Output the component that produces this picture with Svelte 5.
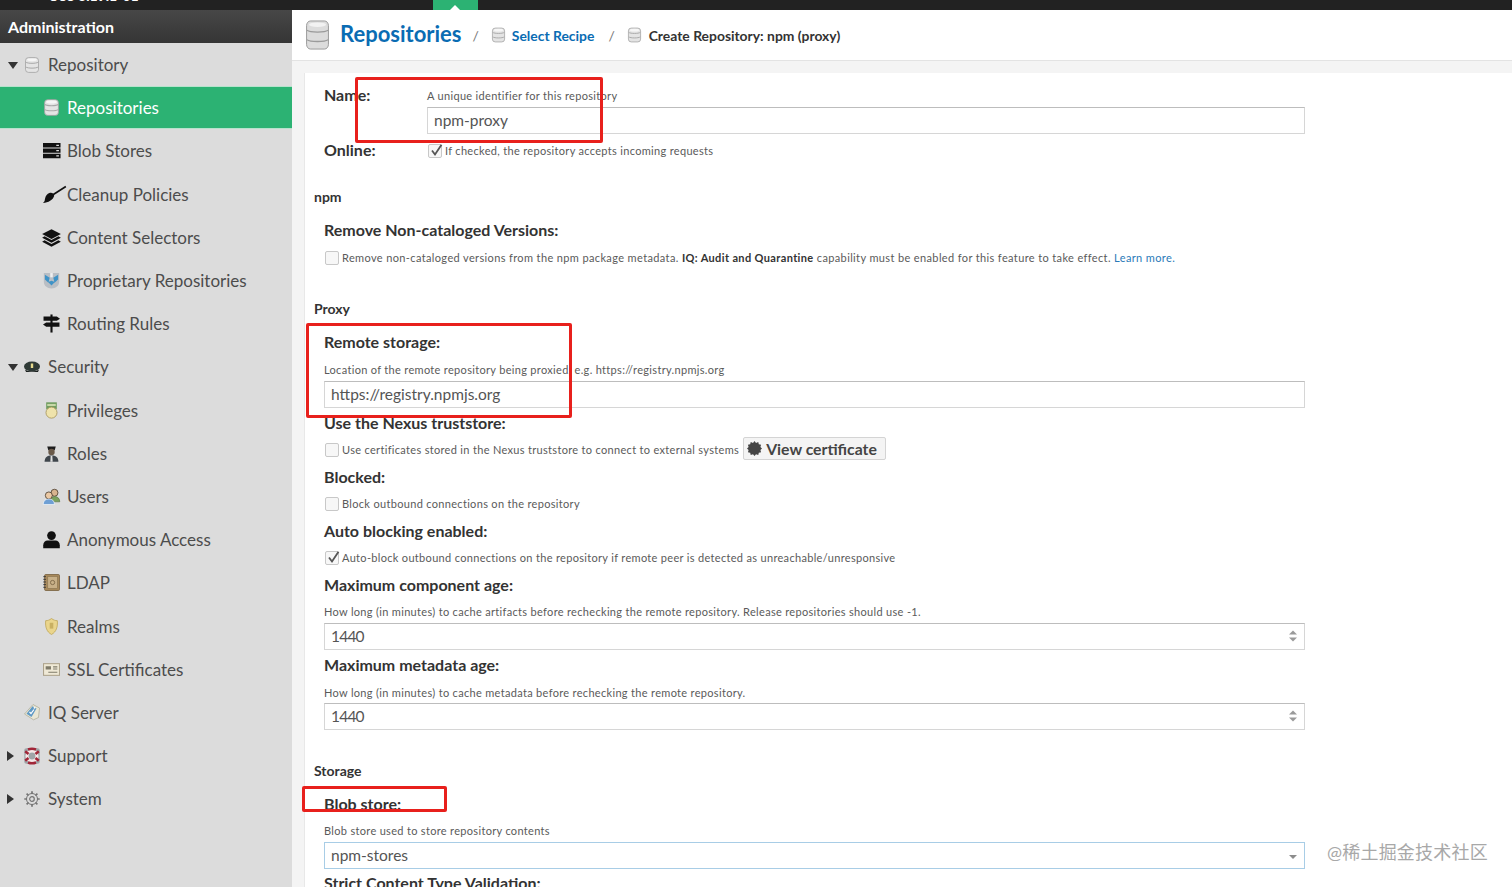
<script>
	const menu = [
		{ label: "Repository", icon: "db", level: 1, caret: "down" },
		{ label: "Repositories", icon: "db", level: 2, active: true },
		{ label: "Blob Stores", icon: "blob", level: 2 },
		{ label: "Cleanup Policies", icon: "broom", level: 2 },
		{ label: "Content Selectors", icon: "layers", level: 2 },
		{ label: "Proprietary Repositories", icon: "proprietary", level: 2 },
		{ label: "Routing Rules", icon: "signpost", level: 2 },
		{ label: "Security", icon: "hat", level: 1, caret: "down" },
		{ label: "Privileges", icon: "medal", level: 2 },
		{ label: "Roles", icon: "officer", level: 2 },
		{ label: "Users", icon: "users", level: 2 },
		{ label: "Anonymous Access", icon: "person", level: 2 },
		{ label: "LDAP", icon: "book", level: 2 },
		{ label: "Realms", icon: "shield", level: 2 },
		{ label: "SSL Certificates", icon: "cert", level: 2 },
		{ label: "IQ Server", icon: "tag", level: 1 },
		{ label: "Support", icon: "buoy", level: 1, caret: "right" },
		{ label: "System", icon: "gear", level: 1, caret: "right" },
	];
</script>

{#snippet icon(name)}
	<svg class="icon" viewBox="0 0 16 16">
		{#if name === "db"}
			<rect x="1.500" y=".6" width="13" height="14.800" rx="3" fill="#e4e4e4" stroke="#a2a2a2" stroke-width=".8" />
			<path d="M1.800 5.200c2 1.500 10.400 1.500 12.400 0M1.800 10c2 1.500 10.400 1.500 12.400 0" fill="none" stroke="#a8a8a8" stroke-width="1" />
			<ellipse cx="8" cy="2.800" rx="5" ry="1.400" fill="#f6f6f6" />
		{:else if name === "blob"}
			<path d="M0 1h16.500v4.200H0zM0 6h16.500v4.200H0zM0 11h16.500v4.200H0z" fill="#111" />
			<path d="M12.500 2.500h2.500v1.200h-2.500zM12.500 7.500h2.500v1.200h-2.500zM12.500 12.500h2.500v1.200h-2.500z" fill="#ddd" />
		{:else if name === "broom"}
			<path d="M9 8.500 21.500.5" stroke="#111" stroke-width="1.500" fill="none" />
			<path d="M6 6.500c2.500-.8 4.800 .8 4.500 3-1 3.500-5.500 6.500-10.500 6.500 2-2 1.500-2.500 2-4.500.5-2.400 2-4.200 4-5z" fill="#111" />
		{:else if name === "layers"}
			<path d="M8 .2 16.800 4.800 8 9.400-.8 4.800z" fill="#111" />
			<path d="M1.500 6.800-.8 8.300 8 13l8.800-4.700-2.300-1.500L8 10.300z" fill="#111" />
			<path d="M1.500 10.600-.8 12 8 16.600l8.800-4.600-2.300-1.400L8 14z" fill="#111" />
		{:else if name === "proprietary"}
			<path d="M.8 1h14.400v8.500c0 3.500-3 6-7.200 6S.8 13 .8 9.500z" fill="#b9bec4" />
			<path d="M1.800 2.500l4.500 3-1.200 4.500-3.300-3zM14.200 2.500l-4.500 3 1.200 4.500 3.300-3zM4.800 9.500 8 12.800l3.200-3.300L8 8.300z" fill="#3f93c7" />
			<path d="M6.800 1h2.400v4H6.800z" fill="#f0f0f0" />
		{:else if name === "signpost"}
			<path d="M7 -.5h2v17H7z" fill="#111" />
			<path d="M.5 1.500h12.500l3 2-3 2H.5zM15.500 7H3L0 9l3 2h12.500z" fill="#111" />
		{:else if name === "hat"}
			<ellipse cx="8" cy="7.500" rx="8" ry="5" fill="#2f3a36" />
			<path d="M1 10.500c3 2.500 11 2.500 14 0l-1 2.500H2z" fill="#1a1f1d" />
			<path d="M6.800 4.500h2.400v4.500H6.800z" fill="#e5d98c" />
		{:else if name === "medal"}
			<rect x="3" y=".3" width="10" height="6.500" fill="#6f9c5e" />
			<path d="M4 1.800h8v2H4z" fill="#c7d8a8" />
			<circle cx="8" cy="10" r="5.200" fill="#efe3ab" stroke="#a8965c" stroke-width=".8" />
		{:else if name === "officer"}
			<path d="M4 1.500h8l-1 3.500H5z" fill="#1d1d1d" />
			<circle cx="8" cy="6.500" r="3" fill="#6a5a4a" />
			<path d="M1.500 15.800c0-4.300 2.500-6 6.500-6s6.500 1.700 6.500 6z" fill="#3f464c" />
			<path d="M7.200 10.300h1.600l.3 5.500H6.900z" fill="#e2e2e2" />
		{:else if name === "users"}
			<circle cx="10.800" cy="4.500" r="3.300" fill="#d8b48f" stroke="#4e4030" stroke-width=".8" />
			<path d="M7 13c0-3.300 1.500-5 4-5s4.800 1.700 4.800 5z" fill="#7ba25e" stroke="#4e6a3a" stroke-width=".5" />
			<circle cx="5.500" cy="7" r="3.300" fill="#ecc9a4" stroke="#4e4030" stroke-width=".8" />
			<path d="M.2 15.500c0-3.500 2.200-5.200 5.300-5.200s5.300 1.700 5.300 5.200z" fill="#6e9fd4" stroke="#fff" stroke-width=".6" />
		{:else if name === "person"}
			<circle cx="8" cy="4.300" r="4.100" fill="#111" />
			<path d="M.2 16.300v-2.800c0-3 2-4.500 4-4.500h7.600c2 0 4 1.500 4 4.500v2.800z" fill="#111" />
		{:else if name === "book"}
			<rect x="1.500" y=".5" width="14" height="15" rx="1" fill="#a98a5c" stroke="#6e5735" stroke-width=".7" />
			<rect x="4.500" y="2.500" width="9" height="11" fill="#c8b088" stroke="#84704c" stroke-width=".5" />
			<path d="M.3 2.500h2.500M.3 5h2.500M.3 7.500h2.500M.3 10h2.500M.3 12.500h2.500" stroke="#333" stroke-width=".9" />
			<circle cx="9" cy="8" r="2" fill="none" stroke="#7a6444" stroke-width=".8" />
		{:else if name === "shield"}
			<path d="M8 .5c2 1.500 3.500 2 5.500 2 .5 6-1 10.500-5.500 13-4.500-2.500-6-7-5.500-13 2 0 3.500-.5 5.500-2z" fill="#ead58c" stroke="#c0a95c" stroke-width=".8" />
			<path d="M6.300 4.500h3.400v5.500H6.300z" fill="#c9b062" />
		{:else if name === "cert"}
			<rect x=".5" y="2.500" width="15" height="11" fill="#efe9d6" stroke="#ada38c" stroke-width="1" />
			<path d="M2.500 5h5v3h-5zM9.500 5h4v1h-4zM9.500 7h4v1h-4zM5 10h8.500v1H5z" fill="#7f7b6a" />
		{:else if name === "tag"}
			<path d="M9 .5 15.500 4l-1 9.500-5 2.300L.5 10z" fill="#e9e6d4" stroke="#aaa994" stroke-width=".7" />
			<path d="M8.500 2.200 12.500 4.500l-5 8.500L2.500 9.800z" fill="#5f99c4" />
			<path d="M5.500 8l1.500 1.500 3-4" stroke="#fff" stroke-width="1.200" fill="none" />
			<circle cx="10.500" cy="3.800" r=".9" fill="#fff" />
		{:else if name === "buoy"}
			<rect x=".3" y=".3" width="15.400" height="15.400" rx="2" fill="#9fa5a8" />
			<circle cx="8" cy="8" r="5" fill="none" stroke="#f4e8e8" stroke-width="3.200" />
			<path d="M1.200 3.200l3.300 2.800M14.800 3.200l-3.300 2.800M1.200 12.800l3.300-2.800M14.800 12.800l-3.300-2.800M4 1.500c2.500-1 5.500-1 8 0M4 14.500c2.500 1 5.500 1 8 0" stroke="#a12638" stroke-width="2.500" fill="none" />
		{:else if name === "gear"}
			<circle cx="8" cy="8" r="5.500" fill="none" stroke="#747474" stroke-width="1" />
			<circle cx="8" cy="8" r="2.300" fill="none" stroke="#747474" stroke-width="1.200" />
			<path d="M8 .3v2.700M8 13v2.700M.3 8H3M13 8h2.700M2.600 2.600l1.900 1.900M11.500 11.500l1.900 1.900M13.400 2.600l-1.900 1.900M4.500 11.500l-1.900 1.900" stroke="#747474" stroke-width="1.700" />
		{/if}
	</svg>
{/snippet}

{#snippet check(on, text)}
	<span class="box">
		{#if on}
			<svg viewBox="0 0 14 14"><path d="M3 6.500 6 10.500 12.500 .8" fill="none" stroke="#555" stroke-width="1.800" /></svg>
		{/if}
	</span>
	<span class="help">{@render text()}</span>
{/snippet}

{#snippet spinner()}
	<svg class="spin" viewBox="0 0 8 12"><path d="M0 4.500 4 .5l4 4zM0 7.500h8l-4 4z" fill="#9a9a9a" /></svg>
{/snippet}

<div class="app">
	<header class="topbar">
		<span class="brand">OSS 3.19.1-01</span>
		<span class="tab"></span>
	</header>

	<div class="body">
		<aside class="sidebar">
			<h2>Administration</h2>
			<nav>
				{#each menu as item}
					<div class="item level{item.level}" class:active={item.active}>
						{#if item.caret}
							<span class="caret {item.caret}"></span>
						{/if}
						{@render icon(item.icon)}
						<span class="text">{item.label}</span>
					</div>
				{/each}
			</nav>
		</aside>

		<main>
			<div class="crumbs">
				<svg class="db-big" viewBox="0 0 16 16" preserveAspectRatio="none">
					<rect x="1" y=".5" width="14" height="15" rx="2.500" fill="#dcdcdc" stroke="#8f8f8f" stroke-width=".5" />
					<path d="M1.300 5.500c2 1.300 11.400 1.300 13.400 0M1.300 10.500c2 1.300 11.400 1.300 13.400 0" fill="none" stroke="#9a9a9a" stroke-width=".7" />
					<ellipse cx="8" cy="2.500" rx="5.500" ry="1.200" fill="#f2f2f2" />
				</svg>
				<span class="title">Repositories</span>
				<span class="sep">/</span>
				{@render icon("db")}
				<span class="link">Select Recipe</span>
				<span class="sep">/</span>
				{@render icon("db")}
				<span class="current">Create Repository: npm (proxy)</span>
			</div>

			<div class="page">
				<form class="panel">
					<div class="row name">
						<span class="label">Name:</span>
						<div class="col">
							<p class="help">A unique identifier for this repository</p>
							<div class="input">npm-proxy</div>
						</div>
					</div>
					<div class="row online">
						<span class="label">Online:</span>
						<div class="checkrow">
							{#snippet t1()}If checked, the repository accepts incoming requests{/snippet}
							{@render check(true, t1)}
						</div>
					</div>

					<h3 class="section npm">npm</h3>
					<div class="label nc">Remove Non-cataloged Versions:</div>
					<div class="checkrow nc-check">
						{#snippet t2()}Remove non-cataloged versions from the npm package metadata. <b>IQ: Audit and Quarantine</b> capability must be enabled for this feature to take effect. <a href="#learn">Learn more.</a>{/snippet}
						{@render check(false, t2)}
					</div>

					<h3 class="section proxy">Proxy</h3>
					<div class="label first-in-section">Remote storage:</div>
					<p class="help gap-help">Location of the remote repository being proxied, e.g. https://registry.npmjs.org</p>
					<div class="input">https://registry.npmjs.org</div>

					<div class="label after-input">Use the Nexus truststore:</div>
					<div class="checkrow gap-label">
						{#snippet t3()}Use certificates stored in the Nexus truststore to connect to external systems{/snippet}
						{@render check(false, t3)}
						<button type="button" class="btn">
							<svg viewBox="0 0 16 16"><path d="M8 0l1.600 2L12 1l.6 2.500L15 4l-.7 2.400L16 8l-1.700 1.600L15 12l-2.400.5L12 15l-2.400-1L8 16l-1.600-2L4 15l-.6-2.500L1 12l.7-2.400L0 8l1.700-1.600L1 4l2.400-.5L4 1l2.400 1z" fill="#444" /></svg>
							View certificate
						</button>
					</div>

					<div class="label after-check">Blocked:</div>
					<div class="checkrow gap-label">
						{#snippet t4()}Block outbound connections on the repository{/snippet}
						{@render check(false, t4)}
					</div>

					<div class="label after-check">Auto blocking enabled:</div>
					<div class="checkrow gap-label">
						{#snippet t5()}Auto-block outbound connections on the repository if remote peer is detected as unreachable/unresponsive{/snippet}
						{@render check(true, t5)}
					</div>

					<div class="label after-check">Maximum component age:</div>
					<p class="help gap-help tight">How long (in minutes) to cache artifacts before rechecking the remote repository. Release repositories should use -1.</p>
					<div class="input num">1440{@render spinner()}</div>

					<div class="label after-input">Maximum metadata age:</div>
					<p class="help gap-help">How long (in minutes) to cache metadata before rechecking the remote repository.</p>
					<div class="input num close">1440{@render spinner()}</div>

					<h3 class="section storage">Storage</h3>
					<div class="label blob">Blob store:</div>
					<p class="help gap-help tight">Blob store used to store repository contents</p>
					<div class="input focused">
						npm-stores
						<svg class="drop" viewBox="0 0 8 4"><path d="M0 0h8L4 4z" fill="#8c8c8c" /></svg>
					</div>
					<div class="label after-select">Strict Content Type Validation:</div>
				</form>
			</div>
		</main>
	</div>

	<!-- hand drawn annotations on top of the screenshot -->
	<span class="mark m1"></span>
	<span class="mark m2"></span>
	<span class="mark m3"></span>
	<span class="watermark">@稀土掘金技术社区</span>
</div>

<style>
	:global(body) {
		margin: 0;
	}

	.app {
		position: relative;
		height: 887px;
		overflow: hidden;
		font-family: Lato, "Open Sans", sans-serif;
		color: #333;
		background: #fff;
	}

	.topbar {
		position: relative;
		height: 10px;
		background: #222;
		overflow: hidden;
	}

	.brand {
		position: absolute;
		left: 48px;
		top: -12px;
		color: #fff;
		font-size: 14px;
		font-weight: 700;
		line-height: 16px;
	}

	.tab {
		position: absolute;
		left: 433px;
		top: 0;
		width: 45px;
		height: 10px;
		background: #2cb273;
	}

	.tab::after {
		content: "";
		position: absolute;
		left: 17px;
		bottom: 0;
		border: 5px solid transparent;
		border-top: 0;
		border-bottom-color: #fff;
	}

	.body {
		display: flex;
		height: 877px;
	}

	.sidebar {
		flex: 0 0 292px;
		background: #dcdcdc;
	}

	.sidebar h2 {
		margin: 0;
		height: 33px;
		padding-left: 8px;
		background: linear-gradient(#474747, #353535);
		color: #fff;
		font-size: 16px;
		font-weight: 700;
		line-height: 33px;
	}

	.item {
		position: relative;
		display: flex;
		align-items: center;
		height: 43.2px;
		color: #4c4c4c;
		font-size: 17px;
	}

	.item .icon {
		flex: none;
		width: 16px;
		height: 16px;
		overflow: visible;
	}

	.level1 {
		padding-left: 24px;
	}

	.level1 .text {
		margin-left: 8px;
	}

	.level2 {
		padding-left: 43px;
	}

	.level2 .icon {
		width: 17px;
		height: 17px;
	}

	.level2 .text {
		margin-left: 7px;
	}

	.active {
		background: #2cb273;
		color: #fff;
		box-shadow: inset 0 1px #b7e2cc, inset 0 -1px #b7e2cc;
	}

	.caret {
		position: absolute;
		border-style: solid;
		border-color: transparent;
	}

	.caret.down {
		left: 8px;
		top: 19px;
		border-width: 7px 5px 0;
		border-top-color: #333;
	}

	.caret.right {
		left: 7px;
		top: 17px;
		border-width: 5px 0 5px 7px;
		border-left-color: #333;
	}

	main {
		flex: 1;
		display: flex;
		flex-direction: column;
		min-width: 0;
	}

	.crumbs {
		display: flex;
		align-items: center;
		flex: 0 0 51px;
		padding-left: 13px;
		background: #fff;
		border-bottom: 1px solid #e3e3e3;
		box-sizing: border-box;
	}

	.crumbs .icon {
		width: 15px;
		height: 16px;
		flex: none;
	}

	.db-big {
		width: 25px;
		height: 30px;
		margin-right: 10px;
	}

	.title {
		margin-top: -3px;
		margin-right: -1px;
		color: #0a6cb3;
		font-size: 22px;
		font-weight: 700;
	}

	.sep {
		margin: 0 12px;
		color: #777;
		font-size: 14px;
	}

	.link,
	.current {
		margin-left: 7px;
		font-size: 13.900px;
		font-weight: 700;
	}

	.link {
		margin-left: 6px;
		margin-right: 2px;
		color: #0a6cb3;
	}

	.current {
		color: #333;
	}

	.page {
		flex: 1;
		padding: 12px 0 0 12px;
		background: #f4f4f4;
	}

	.panel {
		height: 100%;
		padding-right: 207px;
		padding-left: 19px;
		background: #fff;
		border-left: 1px solid #e8e8e8;
	}

	.row {
		display: flex;
	}

	.row .label {
		flex: 0 0 103px;
	}

	.col {
		flex: 1;
	}

	.name {
		padding-top: 12px;
	}

	.name .help {
		margin-top: 4px;
	}

	.online {
		margin-top: 6px;
	}

	.label {
		font-size: 16px;
		font-weight: 700;
		line-height: 20px;
		color: #333;
	}

	.help {
		margin: 0;
		font-size: 11px;
		line-height: 14px;
		letter-spacing: .32px;
		color: #5a5a5a;
	}

	.help b {
		color: #333;
	}

	.help a {
		color: #2a7ab8;
		text-decoration: none;
	}

	.input {
		position: relative;
		box-sizing: border-box;
		height: 27px;
		margin-top: 4px;
		padding-left: 6px;
		border: 1px solid #d6d6d6;
		border-top-color: #bdbdbd;
		font-size: 15.500px;
		line-height: 25px;
		color: #555;
	}

	.input.num {
		letter-spacing: -.8px;
	}

	.input.close {
		margin-top: 3px;
	}

	.input.focused {
		border-color: #a8cde6;
	}

	.spin {
		position: absolute;
		right: 7px;
		top: 6px;
		width: 8px;
		height: 12px;
	}

	.drop {
		position: absolute;
		right: 7px;
		top: 12px;
		width: 8px;
		height: 4px;
	}

	.checkrow {
		display: flex;
		align-items: center;
		height: 14px;
		margin-left: 1px;
	}

	.box {
		flex: none;
		width: 12px;
		height: 12px;
		margin-right: 3px;
		border: 1px solid #c8c8c8;
		border-radius: 2px;
		background: #f7f7f7;
	}

	.box svg {
		display: block;
		width: 14px;
		height: 14px;
		margin-top: -1px;
	}

	.online .checkrow {
		margin-top: 4px;
	}

	.section {
		margin: 0 0 0 -10px;
		font-size: 14px;
		font-weight: 700;
		line-height: 16px;
		color: #333;
	}

	.npm {
		margin-top: 29px;
	}

	.nc {
		margin-top: 15px;
	}

	.nc-check {
		margin-top: 11px;
	}

	.nc-check .help {
		letter-spacing: .37px;
	}

	.gap-label {
		margin-top: 10px;
	}

	.gap-help {
		margin-top: 11px;
	}

	.gap-help.tight {
		margin-top: 10px;
	}

	.proxy {
		margin-top: 36px;
	}

	.first-in-section {
		margin-top: 15px;
	}

	.after-input {
		margin-top: 5px;
	}

	.after-check {
		margin-top: 10px;
	}

	.storage {
		margin-top: 33px;
	}

	.blob {
		margin-top: 15px;
	}

	.after-select {
		margin-top: 4px;
	}

	.btn {
		display: flex;
		align-items: center;
		gap: 4px;
		flex: none;
		box-sizing: border-box;
		height: 23px;
		margin: 0 0 3px 4px;
		padding: 0 8px 0 3px;
		border: 1px solid #d4d4d4;
		border-radius: 2px;
		background: #f4f4f4;
		font: 700 15.800px Lato, sans-serif;
		color: #444;
	}

	.btn svg {
		width: 15px;
		height: 15px;
	}

	.mark {
		position: absolute;
		box-sizing: border-box;
		border: 3px solid #e8201c;
		border-radius: 2px;
	}

	.m1 {
		left: 355px;
		top: 77px;
		width: 248px;
		height: 66px;
	}

	.m2 {
		left: 306px;
		top: 323px;
		width: 266px;
		height: 95px;
	}

	.m3 {
		left: 302px;
		top: 786px;
		width: 145px;
		height: 26px;
	}

	.watermark {
		position: absolute;
		left: 1327px;
		top: 840px;
		font-family: Lato, "Noto Sans CJK SC", sans-serif;
		font-size: 18px;
		letter-spacing: .2px;
		line-height: 24px;
		color: #a8a8a8;
	}
</style>
